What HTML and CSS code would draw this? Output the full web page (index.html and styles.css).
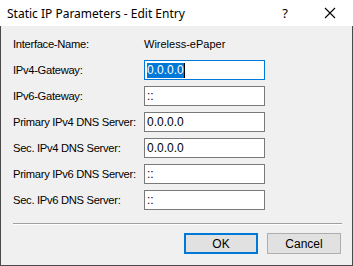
FILE: index.html
```html
<!DOCTYPE html>
<html>
<head>
<meta charset="utf-8">
<link rel="stylesheet" href="styles.css">
</head>
<body>
<div class="window">
  <div class="titlebar">
    <span class="title">Static IP Parameters - Edit Entry</span>
    <span class="help">?</span>
    <span class="close">
      <svg width="12" height="12" viewBox="0 0 12 12"><path d="M1 1 L11 11 M11 1 L1 11" stroke="#000" stroke-width="1.1" fill="none"/></svg>
    </span>
  </div>
  <div class="content">
    <div class="form">
      <div class="label">Interface-Name:</div>
      <div class="value">Wireless-ePaper</div>
      <div class="label">IPv4-Gateway:</div>
      <div class="field focus"><span class="sel">0.0.0.0</span><span class="caret"></span></div>
      <div class="label">IPv6-Gateway:</div>
      <div class="field">::</div>
      <div class="label">Primary IPv4 DNS Server:</div>
      <div class="field">0.0.0.0</div>
      <div class="label">Sec. IPv4 DNS Server:</div>
      <div class="field">0.0.0.0</div>
      <div class="label">Primary IPv6 DNS Server:</div>
      <div class="field">::</div>
      <div class="label">Sec. IPv6 DNS Server:</div>
      <div class="field">::</div>
    </div>
    <div class="separator"></div>
    <div class="buttons">
      <div class="btn default">OK</div>
      <div class="btn">Cancel</div>
    </div>
  </div>
</div>
</body>
</html>
```

FILE: styles.css
```css
html, body {
  margin: 0;
  padding: 0;
  background: #f0f0f0;
}
.window {
  width: 353px;
  height: 266px;
  box-sizing: border-box;
  border: 1px solid #4a4a4a;
  border-top: none;
  background: #f0f0f0;
  display: flex;
  flex-direction: column;
  font-family: "Liberation Sans", Arial, sans-serif;
  font-size: 11px;
  color: #000;
}
.titlebar {
  height: 26px;
  background: #fff;
  display: flex;
  align-items: center;
  padding-left: 7px;
  font-family: "Noto Sans", "Open Sans", sans-serif;
  font-size: 12px;
  margin: 0 -1px;
}
.title {
  flex: 1;
}
.help {
  width: 14px;
  margin-right: 31px;
  font-size: 13px;
  text-align: center;
}
.close {
  width: 14px;
  margin-right: 16px;
  display: flex;
  align-items: center;
  justify-content: center;
}
.content {
  padding: 8px 11px 0 11px;
  display: flex;
  flex-direction: column;
}
.form {
  display: grid;
  grid-template-columns: 132px 121px;
  grid-auto-rows: 20px;
  row-gap: 6px;
}
.label, .value {
  display: flex;
  align-items: center;
  color: #000;
}
.label {
  padding-left: 1px;
  letter-spacing: -0.3px;
  font-size: 11.2px;
}
.value {
  padding-left: 0;
}
.field {
  box-sizing: border-box;
  border: 1px solid #7a7a7a;
  background: #fff;
  display: flex;
  align-items: center;
  padding-left: 2px;
  font-size: 12px;
}
.field.focus {
  border-color: #0078d7;
}
.sel {
  background: #0078d7;
  color: #fff;
  line-height: 15px;
}
.caret {
  width: 1px;
  height: 15px;
  background: #000;
}
.separator {
  margin-top: 13px;
  margin-left: 1px;
  height: 1px;
  width: 329px;
  background: #a0a0a0;
  border-bottom: 1px solid #fff;
}
.buttons {
  display: flex;
  justify-content: flex-end;
  gap: 9px;
  margin-top: 8px;
  padding-right: 0;
}
.btn {
  box-sizing: border-box;
  width: 74px;
  height: 21px;
  border: 1px solid #adadad;
  background: #e1e1e1;
  display: flex;
  align-items: center;
  justify-content: center;
  font-size: 12px;
}
.btn.default {
  border: 2px solid #0078d7;
}
```
